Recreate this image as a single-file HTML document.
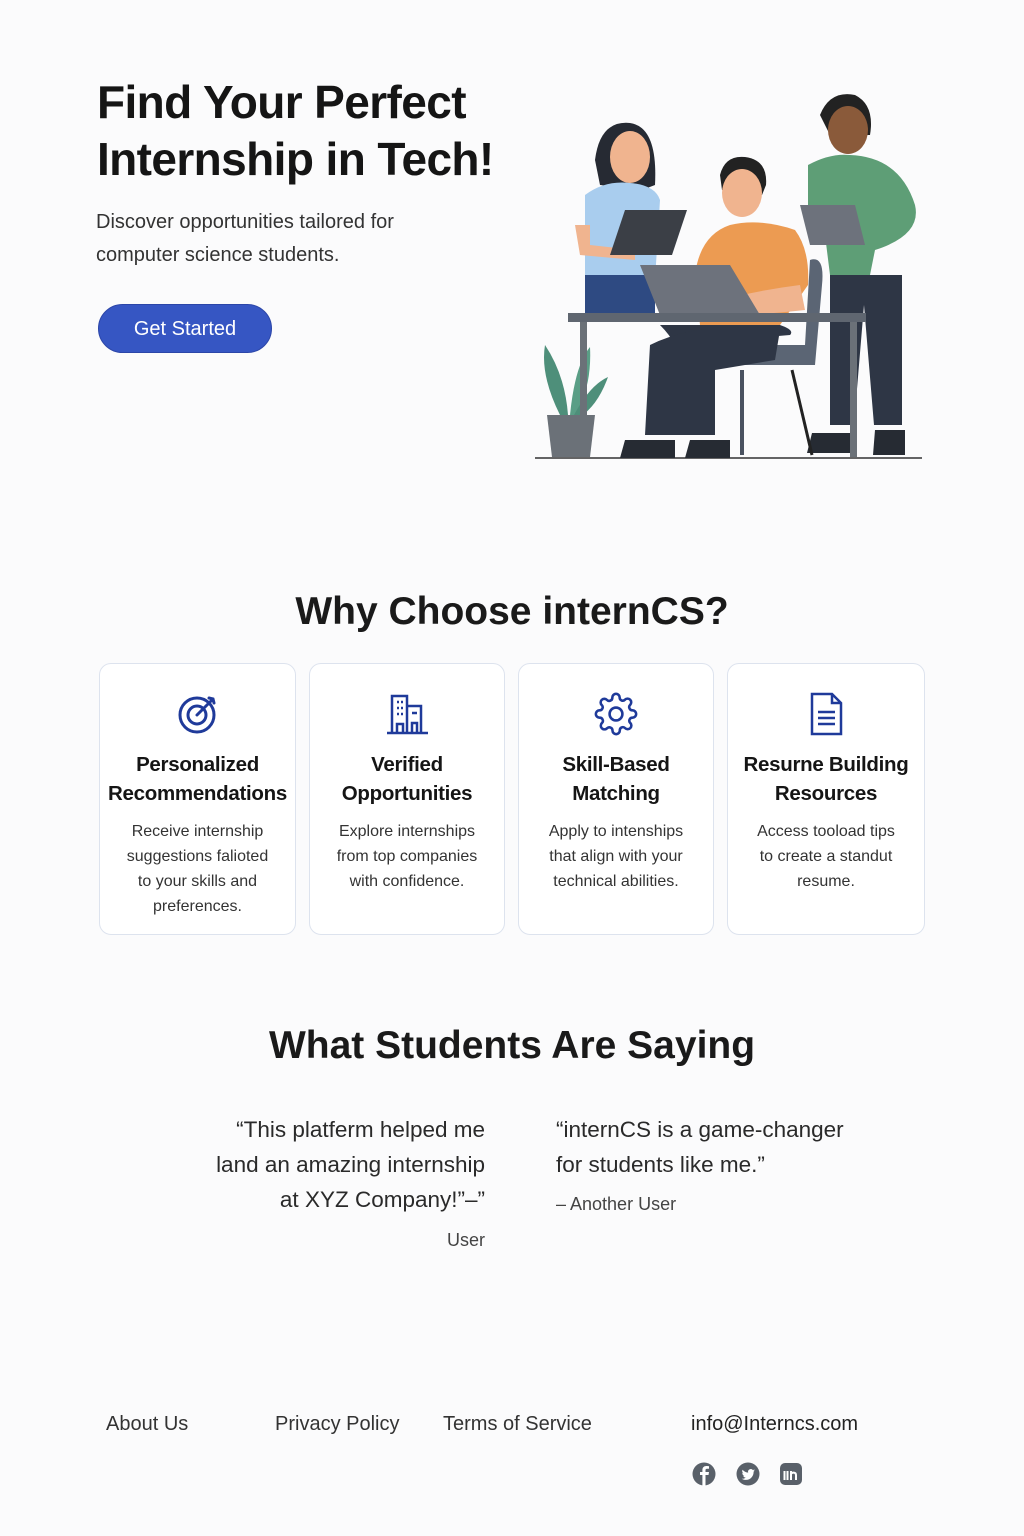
<!DOCTYPE html>
<html><head><meta charset="utf-8"><style>
*{margin:0;padding:0;box-sizing:border-box}
body{width:1024px;height:1536px;background:#fbfbfc;font-family:"Liberation Sans",sans-serif;color:#1a1a1a;position:relative;overflow:hidden}
.a{position:absolute}
h1{position:absolute;left:97px;top:74px;font-size:46px;line-height:57px;font-weight:700;letter-spacing:-0.6px;color:#151515}
.sub{left:96px;top:206px;font-size:20px;line-height:33px;color:#333}
.btn{left:98px;top:304px;width:174px;height:49px;border-radius:25px;background:#3656c3;color:#fff;font-size:20px;text-align:center;line-height:49px;border:1px solid #2c46a8}
h2{position:absolute;width:1024px;text-align:center;font-size:39px;font-weight:700;color:#1a1a1a}
.card{position:absolute;top:663px;height:272px;background:#fff;border:1px solid #dde3ee;border-radius:12px;text-align:center}
.card svg{position:absolute;left:50%;margin-left:-22px;top:28px}
.card .t{position:absolute;top:86px;width:100%;font-size:20.5px;line-height:29px;font-weight:700;color:#151515;letter-spacing:-0.3px}
.card .d{position:absolute;top:155px;width:100%;font-size:16px;line-height:25px;color:#333;padding:0 24px}
.q{font-size:22.5px;line-height:35px;color:#2a2a2a}
.f{top:1413px;font-size:20px;color:#333}
</style></head><body>
<h1>Find Your Perfect<br>Internship in Tech!</h1>
<div class="a sub">Discover opportunities tailored for<br>computer science students.</div>
<div class="a btn">Get Started</div>

<svg class="a" style="left:530px;top:85px" width="400" height="380" viewBox="0 0 400 380">
<line x1="5" y1="373" x2="392" y2="373" stroke="#333" stroke-width="1.5"/>
<path d="M30 330 Q10 290 15 260 Q35 290 38 330Z" fill="#4e8f7a"/>
<path d="M40 330 Q45 280 60 262 Q62 300 46 330Z" fill="#5a9e86"/>
<path d="M44 330 Q60 300 78 292 Q68 320 50 332Z" fill="#4e8f7a"/>
<path d="M17 330h48l-5 42h-38z" fill="#6b7178"/>
<path d="M65 75 Q70 35 100 38 Q128 42 125 100 L112 105 L70 100Z" fill="#262a33"/>
<ellipse cx="100" cy="72" rx="20" ry="26" fill="#f0b48f"/>
<path d="M55 110 Q75 95 100 98 Q125 100 130 115 L125 195 H55Z" fill="#a9cdee"/>
<path d="M55 190 h70 v45 h-70z" fill="#2e4a82"/>
<path d="M45 140 h15 v20 l45 5 v10 l-55 -5z" fill="#f0b48f"/>
<path d="M95 125 h62 l-15 45 h-62z" fill="#3b3f46"/>
<path d="M290 30 Q300 5 325 10 Q345 20 340 50 L300 50Z" fill="#222"/>
<ellipse cx="318" cy="45" rx="20" ry="24" fill="#8a5a3a"/>
<path d="M278 80 Q300 68 320 70 Q370 72 385 120 Q392 150 345 165 L340 190 H300 L295 150 L278 150Z" fill="#5e9e76"/>
<path d="M300 190 h72 v150 h-28 l-10 -120 l-10 120 h-24z" fill="#2e3645"/>
<path d="M270 120 h55 l10 40 h-55z" fill="#6d727c"/>
<path d="M282 348 h40 v20 h-45z M345 345 h30 v25 h-32z" fill="#262b33"/>
<path d="M280 175 Q295 170 292 200 L285 280 H150 L160 260 H275Z" fill="#5b6574"/>
<line x1="212" y1="285" x2="212" y2="370" stroke="#4a5260" stroke-width="4"/>
<line x1="262" y1="285" x2="282" y2="370" stroke="#222" stroke-width="3"/>
<path d="M190 90 Q195 70 215 72 Q238 75 236 100 L232 110 L192 105Z" fill="#222"/>
<ellipse cx="212" cy="108" rx="20" ry="24" fill="#f0b48f"/>
<path d="M165 190 Q170 150 200 140 Q230 133 265 145 Q280 165 278 200 L250 240 H170Z" fill="#ec9b52"/>
<path d="M190 215 Q230 205 270 200 L275 225 Q230 230 200 230Z" fill="#f0b48f"/>
<path d="M130 240 Q140 250 145 260 L260 250 Q265 245 250 240Z" fill="#2e3645"/>
<path d="M120 260 Q170 235 250 245 L245 275 L185 285 L185 350 H115 Z" fill="#2e3645"/>
<path d="M95 355 h50 v18 h-55z M160 355 h40 v18 h-45z" fill="#262b33"/>
<path d="M110 180 h90 l30 50 h-100z" fill="#6d727c"/>
<rect x="38" y="228" width="298" height="9" fill="#5f6670"/>
<rect x="50" y="237" width="7" height="135" fill="#6b7178"/>
<rect x="320" y="237" width="7" height="135" fill="#6b7178"/>
</svg>

<h2 style="top:590px">Why Choose internCS?</h2>

<div class="card" style="left:99px;width:197px">
<svg width="44" height="44" viewBox="0 0 44 44" fill="none" stroke="#1f3a9a" stroke-width="3"><circle cx="21" cy="23" r="17"/><circle cx="21" cy="23" r="9"/><path d="M21 23 L37 7 M33 6 L37 7 L38 11" stroke-linecap="round"/></svg>
<div class="t">Personalized<br>Recommendations</div>
<div class="d">Receive internship suggestions falioted to your skills and preferences.</div></div>
<div class="card" style="left:309px;width:196px">
<svg width="44" height="44" viewBox="0 0 44 44" fill="none" stroke="#1f3a9a" stroke-width="2.5"><path d="M7 40V4h15v36M22 14h14v26M2 41h41"/><path d="M12 10h2M16 10h2M12 16h2M16 16h2M12 22h2M16 22h2M27 21h5M12 40v-8h6v8M27 40v-9h5v9"/></svg>
<div class="t">Verified<br>Opportunities</div>
<div class="d">Explore internships from top companies with confidence.</div></div>
<div class="card" style="left:518px;width:196px">
<svg width="44" height="44" viewBox="0 0 24 24" fill="none" stroke="#1f3a9a" stroke-width="1.4"><circle cx="12" cy="12" r="3.5"/><path d="M19.4 15a1.65 1.65 0 0 0 .33 1.820l.06.06a2 2 0 1 1-2.830 2.830l-.06-.06a1.65 1.65 0 0 0-1.820-.33 1.65 1.65 0 0 0-1 1.510V21a2 2 0 1 1-4 0v-.09A1.65 1.65 0 0 0 9 19.4a1.65 1.65 0 0 0-1.820.33l-.06.06a2 2 0 1 1-2.830-2.830l.06-.06A1.65 1.65 0 0 0 4.68 15a1.65 1.65 0 0 0-1.510-1H3a2 2 0 1 1 0-4h.09A1.65 1.65 0 0 0 4.6 9a1.65 1.65 0 0 0-.33-1.820l-.06-.06a2 2 0 1 1 2.830-2.830l.06.06A1.65 1.65 0 0 0 9 4.68 1.65 1.65 0 0 0 10 3.17V3a2 2 0 1 1 4 0v.09a1.65 1.65 0 0 0 1 1.510 1.65 1.65 0 0 0 1.820-.33l.06-.06a2 2 0 1 1 2.830 2.830l-.06.06A1.65 1.65 0 0 0 19.4 9a1.65 1.65 0 0 0 1.510 1H21a2 2 0 1 1 0 4h-.09a1.65 1.65 0 0 0-1.510 1z"/></svg>
<div class="t">Skill-Based<br>Matching</div>
<div class="d">Apply to intenships that align with your technical abilities.</div></div>
<div class="card" style="left:727px;width:198px">
<svg width="44" height="44" viewBox="0 0 44 44" fill="none" stroke="#1f3a9a" stroke-width="2.5"><path d="M8 2h20l9 9v31H8z M28 2v9h9 M14 20h17M14 26h17M14 32h17"/></svg>
<div class="t">Resurne Building<br>Resources</div>
<div class="d">Access tooload tips to create a standut resume.</div></div>

<h2 style="top:1024px">What Students Are Saying</h2>
<div class="a q" style="right:539px;top:1112px;text-align:right">“This platferm helped me<br>land an amazing internship<br>at XYZ Company!”–”</div>
<div class="a" style="right:539px;top:1230px;font-size:18px;color:#444">User</div>
<div class="a q" style="left:556px;top:1112px">“internCS is a game-changer<br>for students like me.”</div>
<div class="a" style="left:556px;top:1194px;font-size:18px;color:#444">– Another User</div>

<div class="a f" style="left:106px">About Us</div>
<div class="a f" style="left:275px">Privacy Policy</div>
<div class="a f" style="left:443px">Terms of Service</div>
<div class="a f" style="left:691px;color:#222">info@Interncs.com</div>
<svg class="a" style="left:692px;top:1462px" width="120" height="26" viewBox="0 0 120 26">
<circle cx="12" cy="12" r="11.5" fill="#596069"/><path d="M13.5 24V13h3l.5-3h-3.5V8.3c0-1 .4-1.6 1.6-1.6H17V4.2c-.5 0-1.5-.2-2.6-.2-2.5 0-4 1.5-4 4.1V10H8v3h2.4v11z" fill="#fff"/>
<circle cx="56" cy="12" r="11.5" fill="#596069"/><path d="M63 8.5c-.5.2-1 .4-1.6.4.6-.3 1-.9 1.2-1.5-.5.3-1.100.5-1.700.7a2.7 2.7 0 0 0-4.700 2.500c-2.300-.1-4.300-1.200-5.600-2.900-.8 1.300-.3 2.900.8 3.600-.4 0-.9-.1-1.200-.3 0 1.300.9 2.400 2.200 2.700-.4.1-.8.1-1.200 0 .3 1.100 1.400 1.900 2.500 1.900-1.100.9-2.600 1.300-4 1.100 1.200.8 2.700 1.200 4.200 1.200 5 0 7.900-4.300 7.700-8.300.5-.4 1-.9 1.400-1.400z" fill="#fff"/>
<rect x="88" y="1" width="22" height="22" rx="5" fill="#596069"/><path d="M92.5 9v9M95.5 9v9M99 18v-9M99 12c1-2 5-2 5 1v5" stroke="#fff" stroke-width="2" fill="none"/>
</svg>
</body></html>
